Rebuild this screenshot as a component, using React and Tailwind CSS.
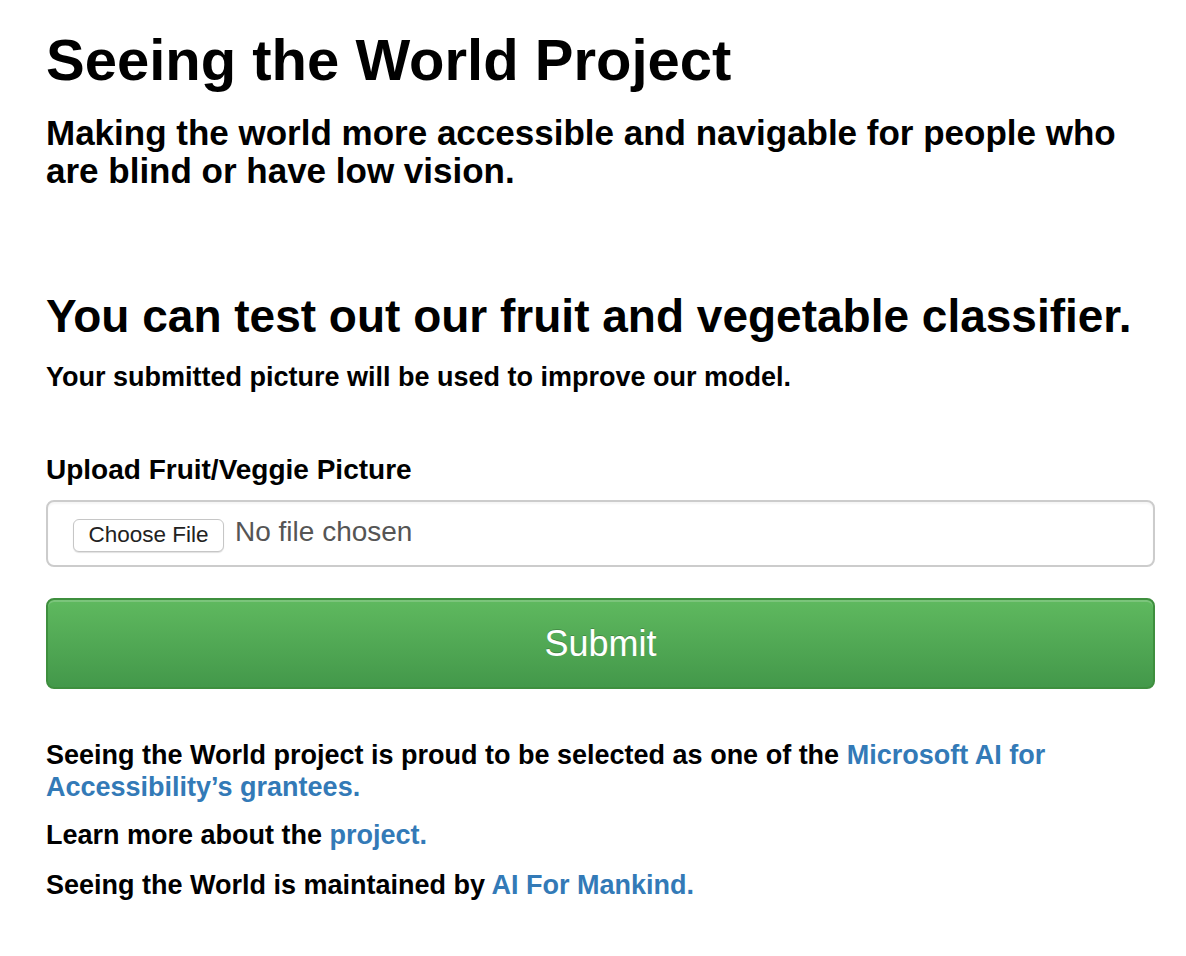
export default function App() {
  return (
    <div
      className="min-h-screen bg-white text-black"
      style={{ fontFamily: '"Liberation Sans", Arial, sans-serif' }}
    >
      <div className="ml-[46px] w-[1109px] pt-[28px] flex flex-col">
        <h1 className="text-[58px] leading-[64px] font-bold">Seeing the World Project</h1>
        <h3 className="mt-[22px] text-[35px] leading-[38px] font-bold">
          Making the world more accessible and navigable for people who are blind or have low vision.
        </h3>

        <h2 className="mt-[101px] text-[46px] leading-[50px] font-bold">
          You can test out our fruit and vegetable classifier.
        </h2>
        <h5 className="mt-[21px] text-[27px] leading-[30px] font-bold">
          Your submitted picture will be used to improve our model.
        </h5>

        <label className="mt-[62px] text-[28px] leading-[31px] font-bold">Upload Fruit/Veggie Picture</label>
        <div className="mt-[15px] h-[67px] border-2 border-[#cccccc] rounded-[8px] bg-white flex items-center pl-[25px] shadow-[inset_0_2px_2px_rgba(0,0,0,0.04)]">
          <div className="mt-[3px] h-[33px] w-[151px] flex items-center justify-center rounded-[6px] border border-[#c6c6c6] bg-white shadow-[0_1px_1px_rgba(0,0,0,0.12)] text-[22.5px] text-[#222]">
            Choose File
          </div>
          <span className="ml-[11px] mb-[4px] text-[28px] text-[#555555]">No file chosen</span>
        </div>

        <div className="mt-[31px] h-[91px] rounded-[8px] border-2 border-[#3e8f3e] bg-gradient-to-b from-[#5fb95f] to-[#43984a] shadow-[inset_0_2px_0_rgba(255,255,255,0.18)] flex items-center justify-center">
          <span className="text-[36px] text-white [text-shadow:0_-1px_0_rgba(0,0,0,0.2)]">Submit</span>
        </div>

        <p className="mt-[50px] text-[27px] leading-[32px] font-bold">
          Seeing the World project is proud to be selected as one of the{' '}
          <a className="text-[#337ab7]">Microsoft AI for Accessibility’s grantees.</a>
        </p>
        <p className="mt-[16px] text-[27px] leading-[32px] font-bold">
          Learn more about the <a className="text-[#337ab7]">project.</a>
        </p>
        <p className="mt-[18px] text-[27px] leading-[32px] font-bold">
          Seeing the World is maintained by <a className="text-[#337ab7]">AI For Mankind.</a>
        </p>
      </div>
    </div>
  );
}
